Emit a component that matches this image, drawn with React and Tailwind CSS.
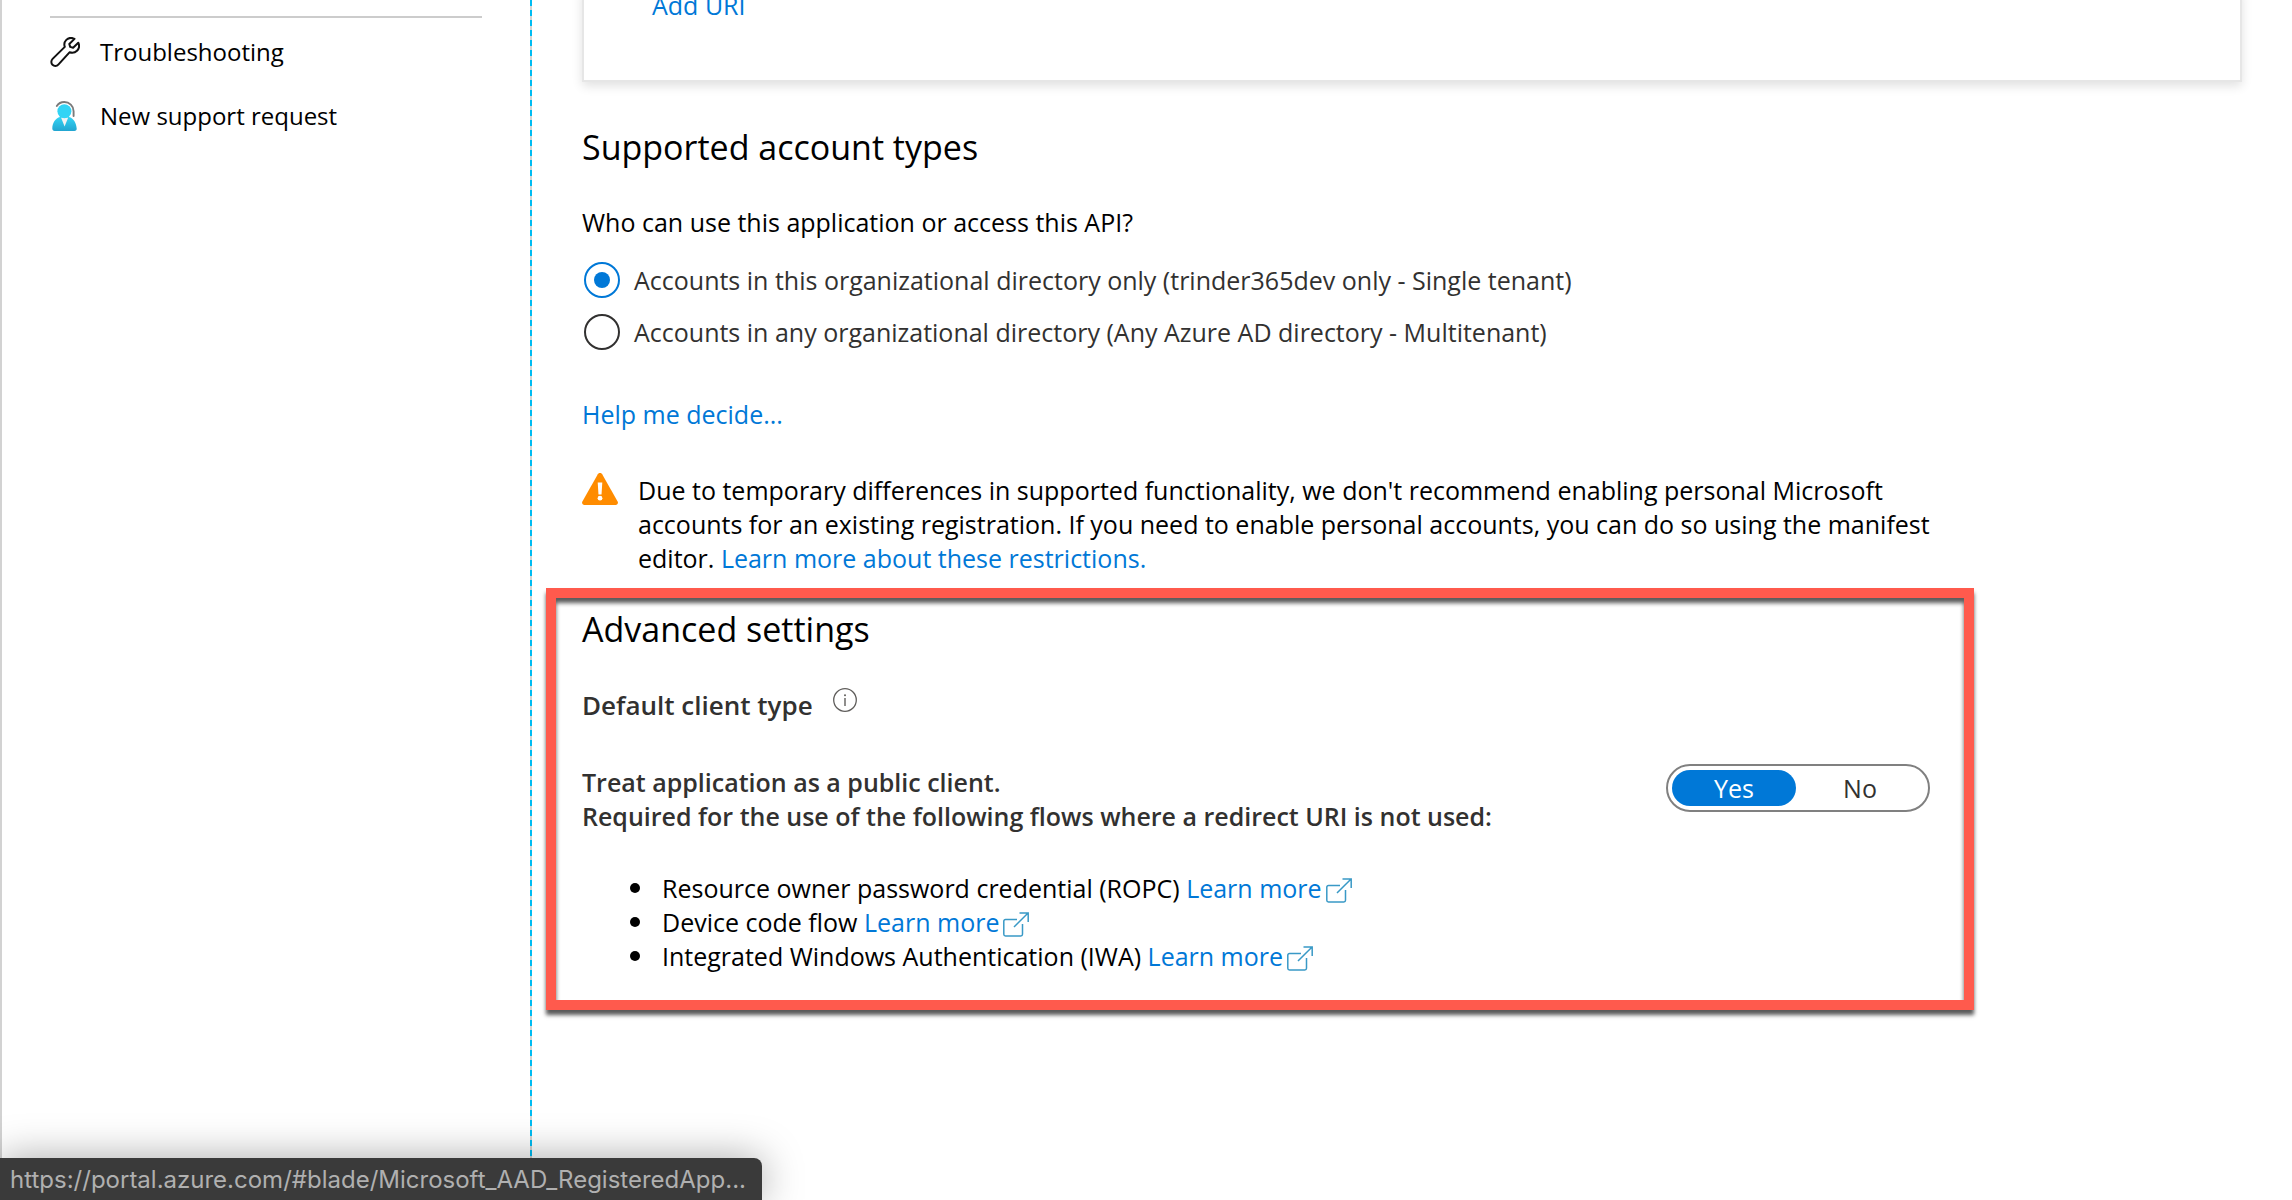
import { useState } from "react";

function WrenchIcon() {
  return (
    <svg viewBox="0 0 30 30" className="h-[30px] w-[30px] shrink-0" fill="none" stroke="#111" strokeWidth="2" strokeLinejoin="round" aria-hidden="true">
      <path d="M24.5 1.9 19.300 7 l.9 2.900 2.900.9 5.200-5.100 c1.400 3.200.7 6.200-1.300 8.100 c-2 2-5 2.400-7.500 1.500 L8.300 27.600 c-1.600 1.700-4.200 1.700-5.800.100 c-1.600-1.600-1.500-4.200.100-5.800 L14.800 9.900 c-.9-2.500-.4-5.100 1.500-7 c2.200-2.100 5.400-2.500 8.200-1z" />
    </svg>
  );
}

function SupportIcon() {
  return (
    <svg viewBox="0 0 30 30" className="h-[30px] w-[30px] shrink-0" aria-hidden="true">
      <defs>
        <linearGradient id="body" x1="0" y1="0" x2="0" y2="1">
          <stop offset="0" stopColor="#32d4f5" />
          <stop offset="1" stopColor="#22a5d0" />
        </linearGradient>
      </defs>
      <path d="M6.800 5 C8.500 2.300 11.200 1 14.300 1 c5 0 9.300 4 9.300 9.200 V15" fill="none" stroke="#7a7a7a" strokeWidth="1.900" strokeLinecap="round" />
      <path d="M10 16 C5.500 17 2.300 22 2.300 27.500 c0 1.500.9 2.500 2.300 2.500 h19.800 c1.500 0 2.500-1 2.300-2.500 C26.300 22 23.500 17 19 16z" fill="url(#body)" />
      <path d="M11 16.500 h7.200 L14.600 25.500z" fill="#f2f2f2" />
      <circle cx="14.400" cy="10.300" r="7" fill="#32d4f5" />
    </svg>
  );
}

function WarningIcon() {
  return (
    <svg viewBox="0 0 36 32" className="h-8 w-9 shrink-0" aria-hidden="true">
      <path d="M15.800 1.300 c1-1.700 3.400-1.700 4.400 0 L35.600 28.500 c.9 1.600-.1 3.500-2 3.500 H2.400 c-1.900 0-2.900-1.900-2-3.500z" fill="#ff8c00" />
      <path d="M15.700 9.500 h4.600 l-.8 12 h-3z" fill="#fff" />
      <circle cx="18" cy="25.200" r="2.400" fill="#fff" />
    </svg>
  );
}

function InfoIcon() {
  return (
    <svg viewBox="0 0 24 24" className="block size-6" fill="none" stroke="#605e5c" aria-hidden="true">
      <circle cx="12" cy="12" r="11.300" strokeWidth="1.300" />
      <path d="M12 10 v8" strokeWidth="1.400" />
      <circle cx="12" cy="7.200" r="1" fill="#605e5c" stroke="none" />
    </svg>
  );
}

function ExternalIcon() {
  return (
    <svg viewBox="0 0 26 25" className="ml-1 inline-block h-[25px] w-[26px] align-[-5px]" fill="none" stroke="#3999c6" strokeWidth="1.500" aria-hidden="true">
      <path d="M14 7.500 H2.500 c-1 0-1.700.7-1.700 1.700 V22.300 c0 1 .7 1.700 1.700 1.700 h15.300 c1 0 1.700-.7 1.700-1.700 V12" />
      <path d="M11 15 24.800 1.200 M16.500 1 h8.700 v9" />
    </svg>
  );
}

const link = "text-[#0078d7] hover:underline";

const supportItems = [
  { label: "Troubleshooting", Icon: WrenchIcon },
  { label: "New support request", Icon: SupportIcon },
];

const accountTypes = [
  { id: "single", label: "Accounts in this organizational directory only (trinder365dev only - Single tenant)" },
  { id: "multi", label: "Accounts in any organizational directory (Any Azure AD directory - Multitenant)" },
];

const flows = ["Resource owner password credential (ROPC)", "Device code flow", "Integrated Windows Authentication (IWA)"];

function Sidebar() {
  return (
    <aside className="w-[530px] shrink-0 border-l-2 border-[#d2d2d2] pt-4 pr-12 pl-12">
      <nav className="border-t-2 border-[#ccc] text-[24px]" aria-label="Support">
        <ul className="pt-0.5">
          {supportItems.map(({ label, Icon }) => (
            <li key={label}>
              <a href="#support" className="flex h-16 items-center gap-5">
                <Icon />
                {label}
              </a>
            </li>
          ))}
        </ul>
      </nav>
    </aside>
  );
}

function AdvancedSettings() {
  const [publicClient, setPublicClient] = useState(true);
  const on = "bg-[#0078d7] text-white";
  const off = "text-[#323130]";
  return (
    <section className="mt-3 -ml-9 w-full max-w-[1428px] border-10 border-[#ff5a4d] pt-[7px] pr-[34px] pb-[27px] pl-[26px] shadow-[0_5px_4px_rgba(0,0,0,0.65),inset_0_5px_4px_rgba(0,0,0,0.65)]">
      <h2 className="text-[34px] leading-[48px]">Advanced settings</h2>
      <div className="mt-[35px] flex gap-5">
        <h3 className="text-[26px] font-semibold text-[#323130]">Default client type</h3>
        <button type="button" aria-label="About the default client type" className="h-6">
          <InfoIcon />
        </button>
      </div>
      <div className="mt-[42px] flex items-start justify-between">
        <p id="public-client" className="pt-px font-semibold text-[#323130]">
          Treat application as a public client.
          <br />
          Required for the use of the following flows where a redirect URI is not used:
        </p>
        <div role="group" aria-labelledby="public-client" className="flex h-12 w-[264px] shrink-0 rounded-full border-2 border-[#808080] p-1">
          <button type="button" aria-pressed={publicClient} onClick={() => setPublicClient(true)} className={`w-[124px] rounded-full ${publicClient ? on : off}`}>
            Yes
          </button>
          <button type="button" aria-pressed={!publicClient} onClick={() => setPublicClient(false)} className={`flex-1 rounded-full ${publicClient ? off : on}`}>
            No
          </button>
        </div>
      </div>
      <ul className="mt-[38px] pl-12">
        {flows.map((flow) => (
          <li key={flow} className="flex items-center gap-[22px] before:size-2.5 before:rounded-full before:bg-black">
            <span>
              {flow}{" "}
              <a href="#learn" className={link}>
                Learn more
                <ExternalIcon />
              </a>
            </span>
          </li>
        ))}
      </ul>
    </section>
  );
}

export default function App() {
  const [type, setType] = useState("single");
  return (
    <div className="relative flex h-screen overflow-hidden bg-white font-['Open_Sans',sans-serif] text-[25px] leading-[34px] text-black">
      <Sidebar />
      <div className="w-0.5 shrink-0 bg-[repeating-linear-gradient(to_bottom,#00bcf2_0_6px,#d2d2d2_6px_10px)]" />
      <main className="min-w-0 flex-1 pr-[50px] pl-[50px]">
        <div className="-mt-3 border-2 border-t-0 border-[#e6e6e6] pb-[58px] pl-[68px] shadow-[0_4px_10px_rgba(0,0,0,0.12)]">
          <button type="button" className={`block ${link}`}>Add URI</button>
        </div>

        <h2 className="mt-[41px] text-[34px] leading-[48px]">Supported account types</h2>
        <fieldset className="mt-[34px]">
          <legend>Who can use this application or access this API?</legend>
          <div className="pt-[15px] pl-0.5">
            {accountTypes.map(({ id, label }) => (
              <label key={id} className="flex h-[52px] items-center gap-3.5 text-[#323130]">
                <input
                  type="radio"
                  name="account-type"
                  checked={type === id}
                  onChange={() => setType(id)}
                  className="grid size-9 shrink-0 appearance-none place-content-center rounded-full border-2 border-[#323130] before:block before:size-4 before:rounded-full checked:border-[#0078d7] checked:before:bg-[#0078d7]"
                />
                {label}
              </label>
            ))}
          </div>
        </fieldset>
        <a href="#help" className={`mt-[39px] block w-fit ${link}`}>Help me decide...</a>

        <div className="mt-[42px] flex max-w-[1370px] gap-5 pb-px">
          <WarningIcon />
          <p>
            Due to temporary differences in supported functionality, we don't recommend enabling personal Microsoft accounts for an existing registration. If you need to enable personal accounts, you can do so using the manifest editor.{" "}
            <a href="#restrictions" className={link}>Learn more about these restrictions.</a>
          </p>
        </div>

        <AdvancedSettings />
      </main>

      <div className="absolute bottom-0 left-0 flex h-[42px] items-center rounded-tr-lg bg-[#3a3a3a] pt-0.5 pr-4 pl-2.5 font-['Inter',sans-serif] text-[24px] text-[#b0b0b0] shadow-[0_0_40px_rgba(0,0,0,0.35)]">
        https://portal.azure.com/#blade/Microsoft_AAD_RegisteredApp...
      </div>
    </div>
  );
}
